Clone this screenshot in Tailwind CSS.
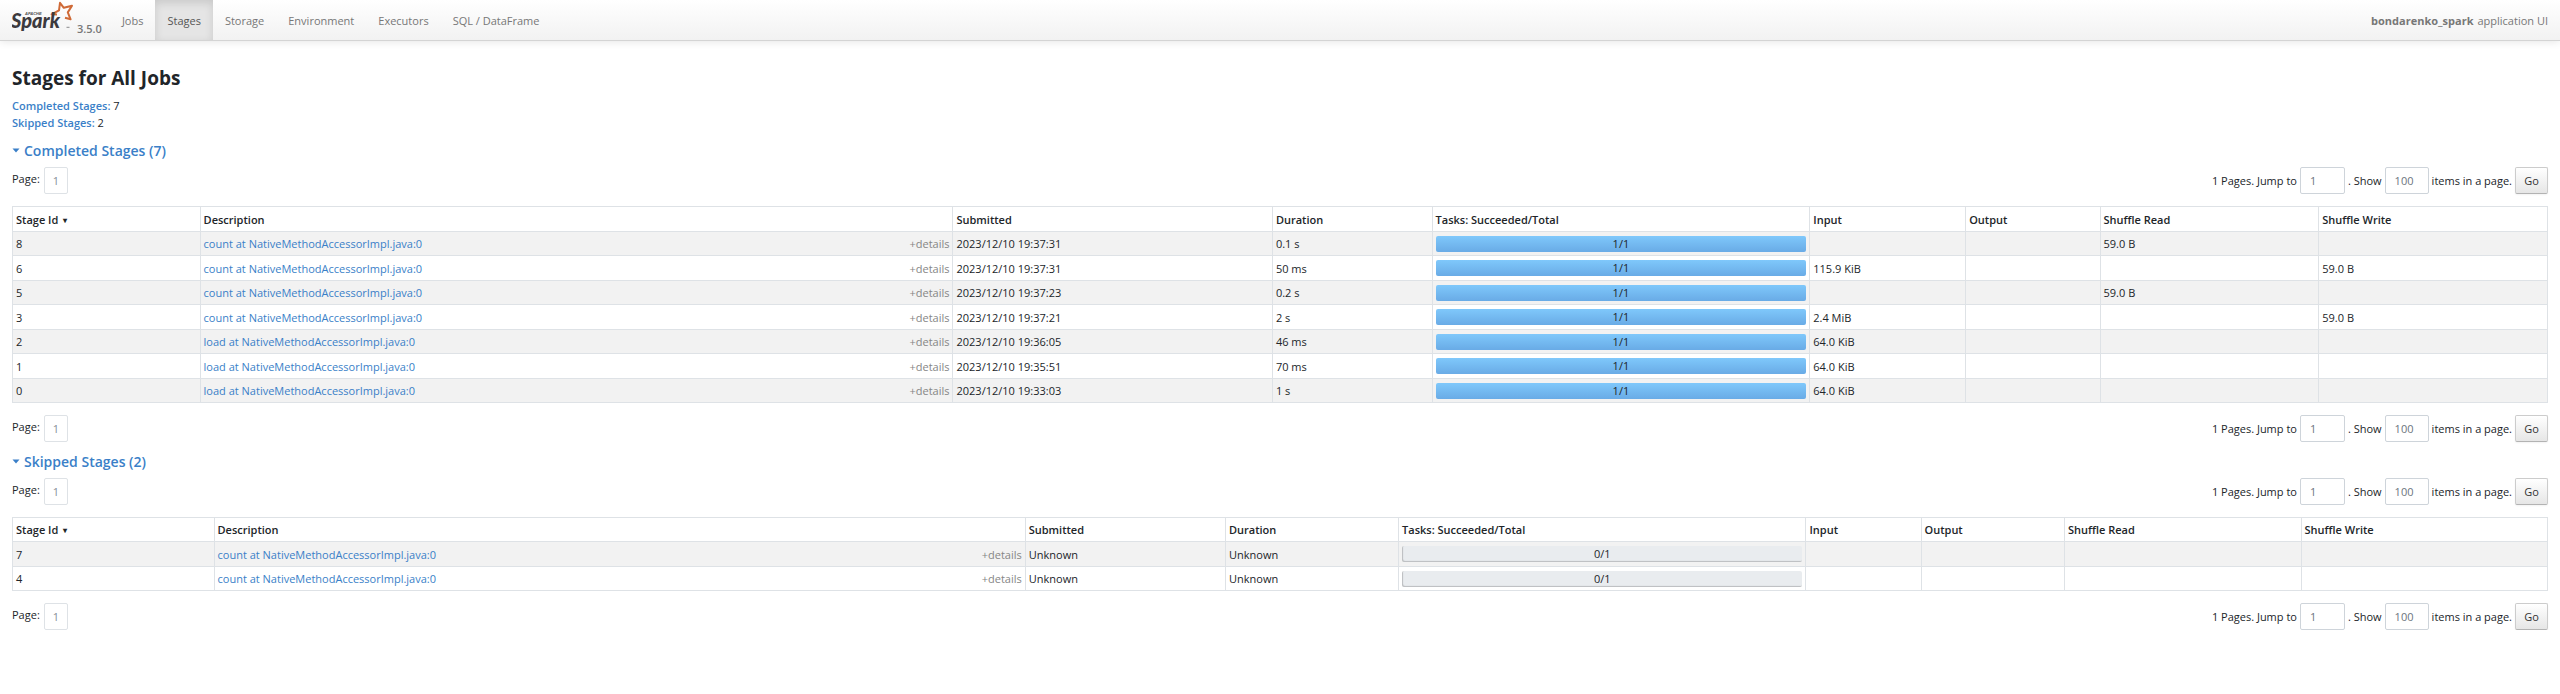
<!DOCTYPE html>
<html lang="en">
<head>
<meta charset="utf-8">
<title>bondarenko_spark - Stages for All Jobs</title>
<script src="https://cdn.jsdelivr.net/npm/@tailwindcss/browser@4"></script>
</head>
<body class="bg-white font-['Open_Sans','Noto_Sans',sans-serif] text-[11px] leading-[17px] text-[#212529]">

<header class="flex h-[41px] items-stretch border-b border-[#d4d4d4] bg-linear-to-b from-white to-[#f2f2f2] pr-3 text-[#777777] shadow-[0_1px_8px_rgba(0,0,0,0.1)]">
  <a href="#" class="mr-2 flex items-start pl-3 font-semibold" aria-label="Apache Spark 3.5.0">
    <svg class="h-9 w-[63px]" viewBox="0 0 63 36" aria-hidden="true">
      <path d="M45 14.6 L39.6 14.3 L47 10.3 L48 2.8 L51.8 7.8 L60 5.7 L55.8 12.4 L58.6 19.3 L53 17.8" fill="none" stroke="#cf6a37" stroke-width="2" stroke-linejoin="round"/>
      <text x="13" y="15" font-family="Liberation Sans" font-weight="700" font-style="italic" font-size="4" fill="#4c4c4e">APACHE</text>
      <text x="-1" y="28" font-family="Lato" font-weight="900" font-style="italic" font-size="20" fill="#3c3a3e">Spark</text>
      <path d="M54.5 27.3h3" stroke="#8a8a8c" stroke-width="1"/>
    </svg>
    <span class="ml-[2px] mt-5">3.5.0</span>
  </a>
  <nav class="flex flex-1 items-stretch">
    <a href="#" class="flex items-center px-3">Jobs</a>
    <a href="#" aria-current="page" class="flex items-center bg-[#e5e5e5] px-3 text-[#555555] shadow-[inset_0_3px_8px_rgba(0,0,0,0.125)]">Stages</a>
    <a href="#" class="flex items-center px-3">Storage</a>
    <a href="#" class="flex items-center px-3">Environment</a>
    <a href="#" class="flex items-center px-3">Executors</a>
    <a href="#" class="flex items-center px-3">SQL / DataFrame</a>
  </nav>
  <p class="flex items-center gap-1"><strong class="font-bold">bondarenko_spark</strong> application UI</p>
</header>

<main class="px-3 pt-6">
  <h1 class="text-[19px] leading-[26px] font-bold">Stages for All Jobs</h1>
  <ul class="mt-[6px]">
    <li><a href="#completed" class="font-semibold text-[#3a7fc8]">Completed Stages:</a> 7</li>
    <li><a href="#skipped" class="font-semibold text-[#3a7fc8]">Skipped Stages:</a> 2</li>
  </ul>

  <section id="completed">
    <h2 class="mt-[9px] mb-[7px] flex h-5 items-center text-[14px] font-semibold text-[#3a7fc8]"><a href="#completed" class="flex items-center gap-1"><svg class="h-2 w-2" viewBox="0 0 8 8" aria-hidden="true"><path d="M0.5 2.5h7L4 6.5z" fill="currentColor"/></svg>Completed Stages (7)</a></h2>

    <div class="flex h-[27px] items-start justify-between">
      <div class="flex"><span class="mt-[3px]">Page:</span><a href="#" class="ml-1 flex h-[27px] w-6 items-center justify-center rounded-xs border border-[#dee2e6] text-[#868e96]">1</a></div>
      <form class="flex items-center">
        <label for="jump1">1 Pages. Jump to</label><input id="jump1" value="1" class="mr-[3px] ml-[3px] h-[27px] w-[45px] rounded-xs border border-[#ced4da] px-[9px] text-[#6c757d]">
        <label for="show1">. Show</label><input id="show1" value="100" class="mr-[3px] ml-[3px] h-[27px] w-11 rounded-xs border border-[#ced4da] px-[9px] text-[#6c757d]">
        <span>items in a page.</span><button type="button" class="ml-[3px] h-[27px] w-[33px] rounded-xs border border-[#cccccc] border-b-[#b3b3b3] bg-linear-to-b from-white to-[#e6e6e6] text-[#333333] shadow-xs">Go</button>
      </form>
    </div>

    <table class="my-3 w-full table-fixed border-collapse [&_td]:border [&_td]:border-[#dee2e6] [&_td]:px-[3px] [&_td]:py-0 [&_th]:border [&_th]:border-[#dee2e6] [&_th]:px-[3px] [&_th]:py-0 [&_th]:text-left [&_th]:font-semibold">
      <colgroup><col class="w-[7.4%]"><col class="w-[29.7%]"><col class="w-[12.6%]"><col class="w-[6.3%]"><col class="w-[14.9%]"><col class="w-[6.15%]"><col class="w-[5.3%]"><col class="w-[8.63%]"><col></colgroup>
      <thead><tr class="h-[25px]"><th>Stage Id <span class="ml-[2px] inline-block align-[1px] text-[8px] leading-none">▾</span></th><th>Description</th><th>Submitted</th><th>Duration</th><th>Tasks: Succeeded/Total</th><th>Input</th><th>Output</th><th>Shuffle Read</th><th>Shuffle Write</th></tr></thead>
      <tbody class="[&_tr]:h-[25px] [&_tr:nth-child(odd)]:h-6 [&_tr:nth-child(odd)]:bg-[#f2f2f2]">
        <tr><td>8</td><td><div class="flex justify-between"><a href="#" class="text-[#3a7fc8]">count at NativeMethodAccessorImpl.java:0</a><button type="button" class="text-[#868686]">+details</button></div></td><td>2023/12/10 19:37:31</td><td>0.1 s</td><td><div class="h-4 rounded-xs bg-linear-to-b from-[#7fc8fb] to-[#69abe6] text-center leading-4">1/1</div></td><td></td><td></td><td>59.0 B</td><td></td></tr>
        <tr><td>6</td><td><div class="flex justify-between"><a href="#" class="text-[#3a7fc8]">count at NativeMethodAccessorImpl.java:0</a><button type="button" class="text-[#868686]">+details</button></div></td><td>2023/12/10 19:37:31</td><td>50 ms</td><td><div class="h-4 rounded-xs bg-linear-to-b from-[#7fc8fb] to-[#69abe6] text-center leading-4">1/1</div></td><td>115.9 KiB</td><td></td><td></td><td>59.0 B</td></tr>
        <tr><td>5</td><td><div class="flex justify-between"><a href="#" class="text-[#3a7fc8]">count at NativeMethodAccessorImpl.java:0</a><button type="button" class="text-[#868686]">+details</button></div></td><td>2023/12/10 19:37:23</td><td>0.2 s</td><td><div class="h-4 rounded-xs bg-linear-to-b from-[#7fc8fb] to-[#69abe6] text-center leading-4">1/1</div></td><td></td><td></td><td>59.0 B</td><td></td></tr>
        <tr><td>3</td><td><div class="flex justify-between"><a href="#" class="text-[#3a7fc8]">count at NativeMethodAccessorImpl.java:0</a><button type="button" class="text-[#868686]">+details</button></div></td><td>2023/12/10 19:37:21</td><td>2 s</td><td><div class="h-4 rounded-xs bg-linear-to-b from-[#7fc8fb] to-[#69abe6] text-center leading-4">1/1</div></td><td>2.4 MiB</td><td></td><td></td><td>59.0 B</td></tr>
        <tr><td>2</td><td><div class="flex justify-between"><a href="#" class="text-[#3a7fc8]">load at NativeMethodAccessorImpl.java:0</a><button type="button" class="text-[#868686]">+details</button></div></td><td>2023/12/10 19:36:05</td><td>46 ms</td><td><div class="h-4 rounded-xs bg-linear-to-b from-[#7fc8fb] to-[#69abe6] text-center leading-4">1/1</div></td><td>64.0 KiB</td><td></td><td></td><td></td></tr>
        <tr><td>1</td><td><div class="flex justify-between"><a href="#" class="text-[#3a7fc8]">load at NativeMethodAccessorImpl.java:0</a><button type="button" class="text-[#868686]">+details</button></div></td><td>2023/12/10 19:35:51</td><td>70 ms</td><td><div class="h-4 rounded-xs bg-linear-to-b from-[#7fc8fb] to-[#69abe6] text-center leading-4">1/1</div></td><td>64.0 KiB</td><td></td><td></td><td></td></tr>
        <tr><td>0</td><td><div class="flex justify-between"><a href="#" class="text-[#3a7fc8]">load at NativeMethodAccessorImpl.java:0</a><button type="button" class="text-[#868686]">+details</button></div></td><td>2023/12/10 19:33:03</td><td>1 s</td><td><div class="h-4 rounded-xs bg-linear-to-b from-[#7fc8fb] to-[#69abe6] text-center leading-4">1/1</div></td><td>64.0 KiB</td><td></td><td></td><td></td></tr>
      </tbody>
    </table>

    <div class="flex h-[27px] items-start justify-between">
      <div class="flex"><span class="mt-[3px]">Page:</span><a href="#" class="ml-1 flex h-[27px] w-6 items-center justify-center rounded-xs border border-[#dee2e6] text-[#868e96]">1</a></div>
      <form class="flex items-center">
        <label for="jump2">1 Pages. Jump to</label><input id="jump2" value="1" class="mr-[3px] ml-[3px] h-[27px] w-[45px] rounded-xs border border-[#ced4da] px-[9px] text-[#6c757d]">
        <label for="show2">. Show</label><input id="show2" value="100" class="mr-[3px] ml-[3px] h-[27px] w-11 rounded-xs border border-[#ced4da] px-[9px] text-[#6c757d]">
        <span>items in a page.</span><button type="button" class="ml-[3px] h-[27px] w-[33px] rounded-xs border border-[#cccccc] border-b-[#b3b3b3] bg-linear-to-b from-white to-[#e6e6e6] text-[#333333] shadow-xs">Go</button>
      </form>
    </div>
  </section>

  <section id="skipped">
    <h2 class="mt-[9px] mb-[7px] flex h-5 items-center text-[14px] font-semibold text-[#3a7fc8]"><a href="#skipped" class="flex items-center gap-1"><svg class="h-2 w-2" viewBox="0 0 8 8" aria-hidden="true"><path d="M0.5 2.5h7L4 6.5z" fill="currentColor"/></svg>Skipped Stages (2)</a></h2>

    <div class="flex h-[27px] items-start justify-between">
      <div class="flex"><span class="mt-[3px]">Page:</span><a href="#" class="ml-1 flex h-[27px] w-6 items-center justify-center rounded-xs border border-[#dee2e6] text-[#868e96]">1</a></div>
      <form class="flex items-center">
        <label for="jump3">1 Pages. Jump to</label><input id="jump3" value="1" class="mr-[3px] ml-[3px] h-[27px] w-[45px] rounded-xs border border-[#ced4da] px-[9px] text-[#6c757d]">
        <label for="show3">. Show</label><input id="show3" value="100" class="mr-[3px] ml-[3px] h-[27px] w-11 rounded-xs border border-[#ced4da] px-[9px] text-[#6c757d]">
        <span>items in a page.</span><button type="button" class="ml-[3px] h-[27px] w-[33px] rounded-xs border border-[#cccccc] border-b-[#b3b3b3] bg-linear-to-b from-white to-[#e6e6e6] text-[#333333] shadow-xs">Go</button>
      </form>
    </div>

    <table class="my-3 w-full table-fixed border-collapse [&_td]:border [&_td]:border-[#dee2e6] [&_td]:px-[3px] [&_td]:py-0 [&_th]:border [&_th]:border-[#dee2e6] [&_th]:px-[3px] [&_th]:py-0 [&_th]:text-left [&_th]:font-semibold">
      <colgroup><col class="w-[7.95%]"><col class="w-[32%]"><col class="w-[7.9%]"><col class="w-[6.83%]"><col class="w-[16.07%]"><col class="w-[4.54%]"><col class="w-[5.66%]"><col class="w-[9.33%]"><col></colgroup>
      <thead><tr class="h-6"><th>Stage Id <span class="ml-[2px] inline-block align-[1px] text-[8px] leading-none">▾</span></th><th>Description</th><th>Submitted</th><th>Duration</th><th>Tasks: Succeeded/Total</th><th>Input</th><th>Output</th><th>Shuffle Read</th><th>Shuffle Write</th></tr></thead>
      <tbody class="[&_tr]:h-6 [&_tr:nth-child(odd)]:h-[25px] [&_tr:nth-child(odd)]:bg-[#f2f2f2]">
        <tr><td>7</td><td><div class="flex justify-between"><a href="#" class="text-[#3a7fc8]">count at NativeMethodAccessorImpl.java:0</a><button type="button" class="text-[#868686]">+details</button></div></td><td>Unknown</td><td>Unknown</td><td><div class="h-4 rounded-xs bg-[#e9ecef] text-center leading-4 shadow-[inset_1px_-1px_1px_rgba(0,0,0,0.2)]">0/1</div></td><td></td><td></td><td></td><td></td></tr>
        <tr><td>4</td><td><div class="flex justify-between"><a href="#" class="text-[#3a7fc8]">count at NativeMethodAccessorImpl.java:0</a><button type="button" class="text-[#868686]">+details</button></div></td><td>Unknown</td><td>Unknown</td><td><div class="h-4 rounded-xs bg-[#e9ecef] text-center leading-4 shadow-[inset_1px_-1px_1px_rgba(0,0,0,0.2)]">0/1</div></td><td></td><td></td><td></td><td></td></tr>
      </tbody>
    </table>

    <div class="flex h-[27px] items-start justify-between">
      <div class="flex"><span class="mt-[3px]">Page:</span><a href="#" class="ml-1 flex h-[27px] w-6 items-center justify-center rounded-xs border border-[#dee2e6] text-[#868e96]">1</a></div>
      <form class="flex items-center">
        <label for="jump4">1 Pages. Jump to</label><input id="jump4" value="1" class="mr-[3px] ml-[3px] h-[27px] w-[45px] rounded-xs border border-[#ced4da] px-[9px] text-[#6c757d]">
        <label for="show4">. Show</label><input id="show4" value="100" class="mr-[3px] ml-[3px] h-[27px] w-11 rounded-xs border border-[#ced4da] px-[9px] text-[#6c757d]">
        <span>items in a page.</span><button type="button" class="ml-[3px] h-[27px] w-[33px] rounded-xs border border-[#cccccc] border-b-[#b3b3b3] bg-linear-to-b from-white to-[#e6e6e6] text-[#333333] shadow-xs">Go</button>
      </form>
    </div>
  </section>
</main>
</body>
</html>
